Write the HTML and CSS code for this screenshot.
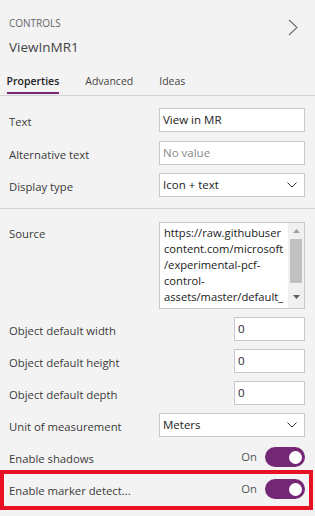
FILE: index.html
```html
<!DOCTYPE html>
<html lang="en">
<head>
<meta charset="utf-8">
<title>Controls</title>
<link rel="stylesheet" href="styles.css">
</head>
<body>
<div class="panel">
  <header class="header">
    <div class="titles">
      <div class="kicker">CONTROLS</div>
      <div class="name">ViewInMR1</div>
    </div>
    <svg class="next" width="10" height="17" viewBox="0 0 10 17"><path d="M1 1 L9 8.5 L1 16" fill="none" stroke="#6e6e6e" stroke-width="1.1"/></svg>
  </header>
  <nav class="tabs">
    <div class="tab active">Properties</div>
    <div class="tab">Advanced</div>
    <div class="tab">Ideas</div>
  </nav>
  <section class="section top">
    <div class="row"><span class="label">Text</span><div class="field">View in MR</div></div>
    <div class="row"><span class="label">Alternative text</span><div class="field placeholder">No value</div></div>
    <div class="row"><span class="label">Display type</span><div class="field select"><span>Icon + text</span><svg class="caret" width="10" height="6" viewBox="0 0 10 6"><path d="M0.5 0.5 L5 5 L9.5 0.5" fill="none" stroke="#333" stroke-width="1"/></svg></div></div>
  </section>
  <section class="section bottom">
    <div class="row source-row"><span class="label">Source</span>
      <div class="field area">
        <div class="area-text">https://raw.githubuser<br>content.com/microsoft<br>/experimental-pcf-<br>control-<br>assets/master/default_</div>
        <div class="scrollbar">
          <svg class="arrow" width="7" height="4" viewBox="0 0 7 4"><path d="M0 4 L3.5 0 L7 4 Z" fill="#a0a0a0"/></svg>
          <div class="thumb"></div>
          <svg class="arrow down" width="7" height="4" viewBox="0 0 7 4"><path d="M0 0 L3.5 4 L7 0 Z" fill="#606060"/></svg>
        </div>
      </div>
    </div>
    <div class="row"><span class="label">Object default width</span><div class="field num">0</div></div>
    <div class="row"><span class="label">Object default height</span><div class="field num">0</div></div>
    <div class="row"><span class="label">Object default depth</span><div class="field num">0</div></div>
    <div class="row"><span class="label">Unit of measurement</span><div class="field select"><span>Meters</span><svg class="caret" width="10" height="6" viewBox="0 0 10 6"><path d="M0.5 0.5 L5 5 L9.5 0.5" fill="none" stroke="#333" stroke-width="1"/></svg></div></div>
    <div class="row toggle-row"><span class="label">Enable shadows</span><span class="state">On</span><span class="toggle"><span class="knob"></span></span></div>
    <div class="highlight">
      <div class="row toggle-row"><span class="label">Enable marker detect...</span><span class="state">On</span><span class="toggle"><span class="knob"></span></span></div>
    </div>
  </section>
</div>
</body>
</html>
```

FILE: styles.css
```css
* { box-sizing: border-box; }
html, body {
  margin: 0;
  padding: 0;
  background: #f3f3f3;
}
body {
  font-family: "Open Sans", "Noto Sans", sans-serif;
  color: #333;
  width: 315px;
  height: 516px;
  overflow: hidden;
}
.panel {
  display: flex;
  flex-direction: column;
}
.header {
  display: flex;
  justify-content: space-between;
  align-items: flex-start;
  padding: 16px 17px 0 9px;
}
.kicker {
  font-size: 10px;
  line-height: 14px;
  color: #666;
}
.name {
  margin-top: 7px;
  font-size: 13.5px;
  line-height: 20px;
  color: #444;
}
.next {
  margin-top: 3px;
}
.tabs {
  display: flex;
  gap: 26px;
  margin-top: 16px;
  padding: 0 0 1px 6.5px;
  border-bottom: 1px solid #d4d4d4;
}
.tab {
  font-size: 10.5px;
  line-height: 16px;
  padding-bottom: 3px;
  border-bottom: 2px solid transparent;
  color: #444;
}
.tab.active {
  font-weight: 600;
  color: #222;
  border-bottom-color: #742774;
}
.section {
  display: flex;
  flex-direction: column;
}
.section.top {
  padding: 12px 10px 11px 9px;
  gap: 8.5px;
  border-bottom: 1px solid #d4d4d4;
}
.section.bottom {
  padding: 13px 2px 0 9px;
  gap: 8px;
}
.row {
  display: flex;
  align-items: center;
}
.section.bottom > .row {
  margin-right: 8px;
}
.label {
  flex: 1;
  font-size: 11.3px;
  line-height: 16px;
  padding-top: 4px;
  color: #3a3a3a;
  white-space: nowrap;
}
.field {
  width: 146px;
  height: 24px;
  background: #fff;
  border: 1px solid #c8c8c8;
  font-size: 11.5px;
  line-height: 22px;
  padding: 0 3px;
  color: #222;
}
.field.placeholder {
  color: #8a8a8a;
}
.field.select {
  display: flex;
  justify-content: space-between;
  align-items: center;
  padding-right: 7px;
}
.field.num {
  width: 71px;
}
.source-row {
  align-items: flex-start;
}
.source-row .label {
  padding-top: 4px;
}
.field.area {
  height: 87px;
  display: flex;
  padding: 0 0 0 4px;
  overflow: hidden;
}
.area-text {
  flex: 1;
  font-size: 11.2px;
  line-height: 16px;
  padding-top: 2px;
  color: #1a1a1a;
  white-space: nowrap;
  overflow: hidden;
}
.scrollbar {
  width: 16px;
  display: flex;
  flex-direction: column;
  align-items: center;
  padding: 6px 0 9px;
  background: #f0f0f0;
}
.thumb {
  width: 12px;
  height: 44px;
  margin-top: 6px;
  background: #c1c1c1;
}
.arrow.down {
  margin-top: auto;
}
.toggle-row {
  gap: 8px;
}
.section.bottom > .toggle-row {
  margin-top: 2px;
}
.state {
  font-size: 11.3px;
  line-height: 16px;
  color: #555;
}
.toggle {
  width: 40px;
  height: 20px;
  border-radius: 10px;
  background: #742774;
  display: flex;
  align-items: center;
  justify-content: flex-end;
  padding-right: 3px;
}
.knob {
  width: 13px;
  height: 13px;
  border-radius: 50%;
  background: #fff;
}
.highlight {
  margin: -5px 0 0 -9px;
  border: 4px solid #e81123;
  padding: 5px 4px 7px 5px;
}
```
